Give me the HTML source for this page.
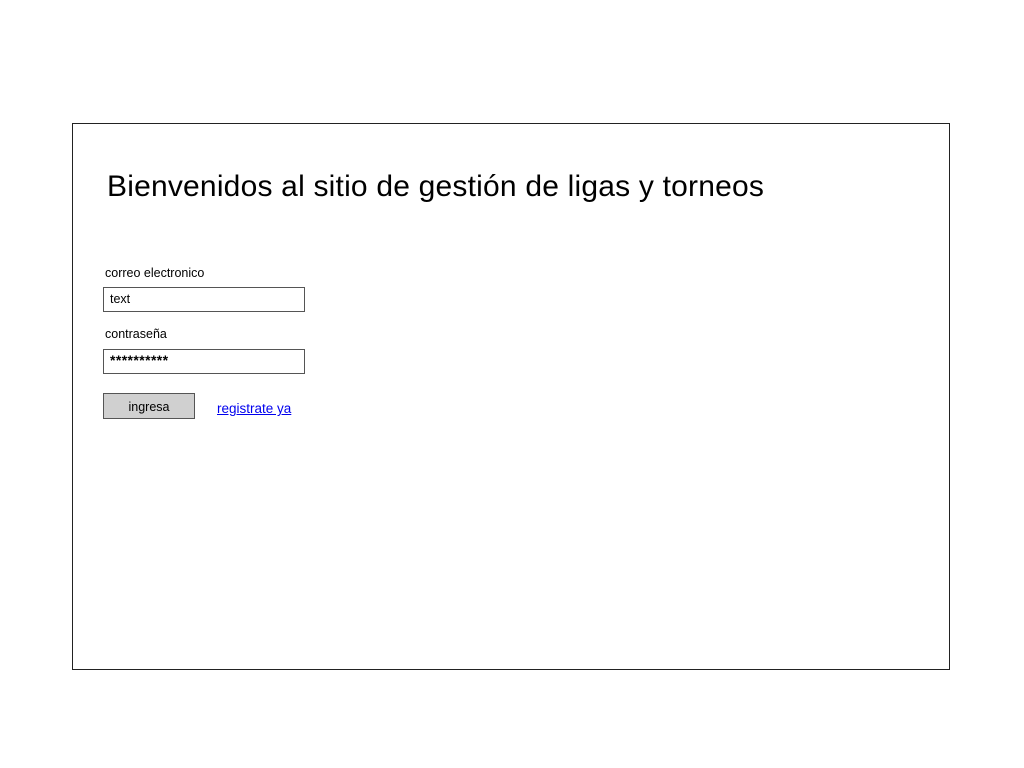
<!DOCTYPE html>
<html><head><meta charset="utf-8"><style>
body{margin:0;width:1024px;height:768px;background:#fff;position:relative;font-family:"Liberation Sans",sans-serif;overflow:hidden}
.frame{position:absolute;left:72px;top:123px;width:876px;height:545px;border:1px solid #222}
.t{position:absolute;white-space:nowrap;color:#000}
.box{position:absolute;border:1.5px solid #555;background:#fff;box-sizing:border-box}
</style></head><body>
<div class="frame"></div>
<div class="t" style="left:107px;top:170px;font-size:30px;letter-spacing:0.2px">Bienvenidos al sitio de gestión de ligas y torneos</div>
<div class="t" style="left:105px;top:266px;font-size:12.5px">correo electronico</div>
<div class="box" style="left:103px;top:287px;width:202px;height:25px"></div>
<div class="t" style="left:110px;top:292px;font-size:12.5px">text</div>
<div class="t" style="left:105px;top:327px;font-size:12.5px">contraseña</div>
<div class="box" style="left:103px;top:349px;width:202px;height:25px"></div>
<div class="t" style="left:110px;top:352px;font-size:14px;font-weight:bold;letter-spacing:0.4px">**********</div>
<div class="box" style="left:103px;top:393px;width:92px;height:26px;background:#d0d0d0;text-align:center;font-size:12.5px;line-height:26px">ingresa</div>
<div class="t" style="left:217px;top:401px;font-size:13.5px;color:#00e;text-decoration:underline">registrate ya</div>
</body></html>
